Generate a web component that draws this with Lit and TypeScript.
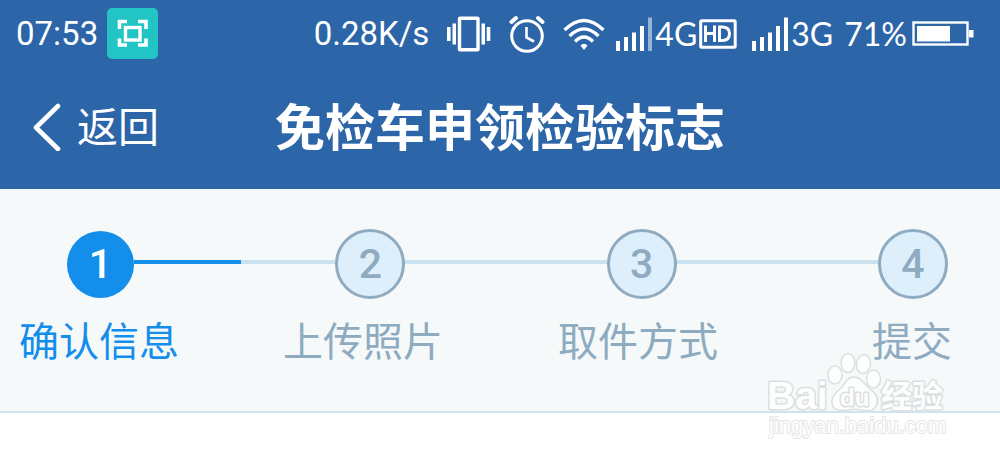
import { LitElement, html, svg, css } from "lit";
import { customElement, property } from "lit/decorators.js";

@customElement("status-bar")
class StatusBar extends LitElement {
  static styles = css`
    :host {
      display: flex;
      align-items: center;
      justify-content: space-between;
      height: 68px;
      padding: 0 26px 0 16px;
      color: #fff;
      font: 33px/40px Roboto, sans-serif;
    }
    .left,
    .right,
    .icons,
    .net {
      display: flex;
      align-items: center;
    }
    .left {
      gap: 9px;
    }
    .capture {
      margin-top: -2px;
    }
    .right {
      gap: 11px;
    }
    .icons {
      gap: 18px;
    }
    .net {
      gap: 2px;
      font-family: Lato, sans-serif;
      font-size: 32px;
    }
    .sim {
      margin-right: 4px;
    }
    .power {
      gap: 5px;
    }
    svg {
      display: block;
      flex: none;
    }
  `;

  private signal(strong: boolean) {
    return html`<svg width="37" height="36" viewBox="0 0 37 36" fill="#fff" aria-hidden="true">
      <path d="M0 25h4v10H0zM8 21h4v14H8zM16 16.500h4V35h-4zM24 10h4v25h-4z" />
      <path d="M32 1.500h4V35h-4z" opacity=${strong ? 1 : 0.5} />
    </svg>`;
  }

  render() {
    return html`
      <div class="left">
        <span>07:53</span>
        <svg class="capture" width="51" height="51" viewBox="0 0 51 51" fill="none" aria-hidden="true">
          <rect width="51" height="51" rx="5" fill="#22c4c4" />
          <path
            d="M12.500 21v-7.500H20M31 13.500h8V21M39 30.500V37h-8M20 37h-7.500v-6.500"
            stroke="#fff"
            stroke-width="3.600"
          />
          <rect x="18.500" y="19.500" width="14.500" height="12.500" stroke="#fff" stroke-width="3.400" />
        </svg>
      </div>
      <div class="right">
        <div class="icons">
          <span>0.28K/s</span>
          <svg width="44" height="36" viewBox="0 0 44 36" aria-hidden="true">
            <path d="M0 11h3.600v14H0zM5.500 7.500h3.500v21H5.500zM34.500 7.500H38v21h-3.500zM39.700 11h3.600v14h-3.600z" fill="#fff" />
            <rect x="12.500" y="2.200" width="18.500" height="31.500" rx="0.500" fill="none" stroke="#fff" stroke-width="3.400" />
          </svg>
          <svg width="36" height="38" viewBox="0 0 36 38" fill="none" stroke="#fff" aria-hidden="true">
            <circle cx="18" cy="21" r="15.300" stroke-width="3" />
            <path d="M2.500 7 7 3M29 3 33.500 7" stroke-width="4" stroke-linecap="round" />
            <path d="M17.500 12v10.500l7.500 4" stroke-width="2.600" />
          </svg>
          <svg width="42" height="34" viewBox="0 0 42 34" fill="none" stroke="#fff" stroke-width="3.200" aria-hidden="true">
            <path d="M1.500 13Q21-6 40.500 13M6.500 19Q21 4.500 35.500 19M12 24.500Q21 15.500 30 24.500" />
            <path d="M17.500 28.500q3.500-3.500 7 0L21 33z" fill="#fff" stroke="none" />
          </svg>
        </div>
        <div class="net sim">
          ${this.signal(false)}<span>4G</span>
          <svg width="38" height="30" viewBox="0 0 38 30" fill="none" stroke="#fff" aria-label="HD">
            <rect x="1.700" y="1.700" width="34.500" height="26.500" rx="1" stroke-width="3" />
            <path d="M6.500 6.500v16.500M15.500 6.500v16.500M6.500 14.500h9M20.500 8h3.500q6.500.500 6.500 6.700T24 21.500h-3.500z" stroke-width="3" />
          </svg>
        </div>
        <div class="net">${this.signal(true)}<span>3G</span></div>
        <div class="net power">
          <span>71%</span>
          <svg width="62" height="26" viewBox="0 0 62 26" aria-hidden="true">
            <rect x="1.500" y="1.500" width="54" height="22" fill="none" stroke="#fff" stroke-width="2.400" />
            <path d="M5 5h33v15.500H5zM57 9h4.500v7.500H57z" fill="#fff" />
          </svg>
        </div>
      </div>
    `;
  }
}

@customElement("nav-header")
class NavHeader extends LitElement {
  @property() heading = "";

  static styles = css`
    :host {
      display: grid;
      grid-template-columns: 1fr auto 1fr;
      align-items: center;
      height: 121px;
      padding: 0 32px 10px;
      box-sizing: border-box;
      color: #fff;
    }
    .back {
      justify-self: start;
      display: flex;
      align-items: center;
      gap: 16px;
      padding: 0;
      border: 0;
      background: none;
      color: inherit;
      font: 41px/48px "Noto Sans CJK SC", sans-serif;
    }
    .back svg {
      margin-top: 6px;
    }
    h1 {
      margin: 0;
      font: bold 50px/60px "Noto Sans CJK SC", sans-serif;
      white-space: nowrap;
    }
  `;

  render() {
    return html`
      <button class="back" type="button">
        <svg width="29" height="48" viewBox="0 0 29 48" fill="none" stroke="#fff" stroke-width="4.600" aria-hidden="true">
          <path d="M26 3 4 24.500 26 46" stroke-linecap="round" stroke-linejoin="round" /></svg
        ><span>返回</span>
      </button>
      <h1>${this.heading}</h1>
    `;
  }
}

@customElement("step-progress")
class StepProgress extends LitElement {
  @property({ type: Array }) steps: string[] = [];
  @property({ type: Number }) current = 0;

  static styles = css`
    :host {
      display: block;
      position: relative;
      padding: 40px 0 42px;
      border-bottom: 2px solid #d0e4ee;
      background: #f5f9fa;
    }
    .track {
      display: flex;
      align-items: center;
      padding: 0 52px 0 67px;
    }
    .dot {
      display: flex;
      flex: none;
      align-items: center;
      justify-content: center;
      box-sizing: border-box;
      width: 70px;
      height: 70px;
      border: 3px solid #8eabc0;
      border-radius: 50%;
      background: #deeffc;
      color: #8eabc0;
      font: 500 41px/48px Roboto, sans-serif;
    }
    .dot.on {
      width: 67px;
      height: 67px;
      border: 0;
      background: #148eeb;
      color: #fff;
    }
    .link {
      flex: 1;
      height: 4px;
      margin-bottom: 4px;
      background: #cae1f0;
    }
    .done {
      width: 53%;
      height: 100%;
      background: #148eeb;
    }
    .labels {
      display: grid;
      grid-template-columns: 264fr 275fr 314fr 128fr;
      margin: 10px 0 0;
      padding: 0 0 0 19px;
      list-style: none;
      color: #8eabc0;
      font: 40px/60px "Noto Sans CJK SC", sans-serif;
      white-space: nowrap;
    }
    .active {
      color: #148eeb;
    }
    .mark {
      position: absolute;
      right: 50px;
      top: 160px;
    }
  `;

  render() {
    return html`
      <div class="track" aria-hidden="true">
        ${this.steps.map(
          (_, i) => html`
            ${i
              ? html`<div class="link">${i - 1 === this.current ? html`<div class="done"></div>` : null}</div>`
              : null}
            <div class="dot ${i === this.current ? "on" : ""}">${i + 1}</div>
          `
        )}
      </div>
      <ol class="labels">
        ${this.steps.map((s, i) => html`<li class=${i === this.current ? "active" : ""}>${s}</li>`)}
      </ol>
      <brand-mark class="mark"></brand-mark>
    `;
  }
}

@customElement("brand-mark")
class BrandMark extends LitElement {
  static styles = css`
    svg {
      display: block;
    }
    text {
      paint-order: stroke;
      stroke-linejoin: round;
      fill: #fdfefe;
      stroke: #dcdfe1;
      stroke-width: 3px;
    }
    .name {
      font: bold 39px "Liberation Sans", sans-serif;
    }
    .du {
      font: bold 24px "Liberation Sans", sans-serif;
    }
    .cn {
      font: bold 31px "Noto Sans CJK SC", sans-serif;
    }
    .url {
      font: 22px "Liberation Sans", sans-serif;
      stroke: #e4e6e7;
      stroke-width: 2px;
    }
  `;

  render() {
    const toes = [
      [67, 26, 7, 9, 0],
      [80, 14, 7, 9.5, 0],
      [95.5, 15, 7, 9.5, 8],
      [105.5, 30, 7, 9, 0],
    ];
    return html`
      <svg width="182" height="92" viewBox="0 0 182 92">
        <text class="name" x="-1" y="60">Bai</text>
        <g fill="#fdfefe" stroke="#dcdfe1" stroke-width="1.500">
          ${toes.map(
            ([x, y, rx, ry, a]) => svg`<ellipse cx=${x} cy=${y} rx=${rx} ry=${ry} transform="rotate(${a} ${x} ${y})" />`
          )}
          <path
            d="M86 28c8 0 10 8 16 12 7 5 9 11 6 17-3 6-10 5-14 4-5-1-10-1-15 0-6 1-14 1-15-7-1-6 3-10 8-14 5-4 6-12 14-12z"
          />
        </g>
        <text class="du" x="72" y="57">du</text>
        <text class="cn" x="113" y="58">经验</text>
        <text class="url" x="1" y="84">jingyan.baidu.com</text>
      </svg>
    `;
  }
}

@customElement("app-root")
class AppRoot extends LitElement {
  static styles = css`
    :host {
      display: block;
      min-height: 100vh;
      background: #fff;
    }
    header {
      background: #2c65a8;
    }
  `;

  render() {
    return html`
      <header>
        <status-bar></status-bar>
        <nav-header heading="免检车申领检验标志"></nav-header>
      </header>
      <step-progress .steps=${["确认信息", "上传照片", "取件方式", "提交"]} .current=${0}></step-progress>
    `;
  }
}
